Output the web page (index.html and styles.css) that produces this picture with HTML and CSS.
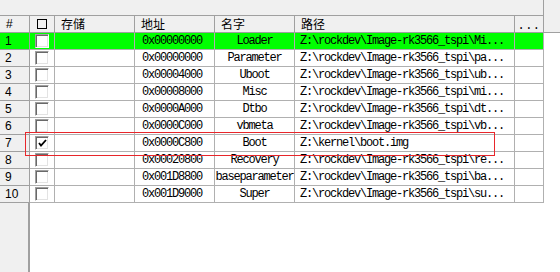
FILE: index.html
```html
<!DOCTYPE html>
<html>
<head>
<meta charset="utf-8">
<link rel="stylesheet" href="styles.css">
</head>
<body>
<div class="screen">
  <div class="head-area">
    <div class="head-main">
      <div class="strip"></div>
      <div class="cols hrow">
        <div class="hc num">#</div>
        <div class="hc chk"><span class="hbox"></span></div>
        <div class="hc">存储</div>
        <div class="hc">地址</div>
        <div class="hc">名字</div>
        <div class="hc">路径</div>
        <div class="hc more">...</div>
      </div>
    </div>
  </div>
  <div class="body">
    <div class="cols row sel">
      <div class="c num">1</div><div class="c chk"><span class="cb"></span></div><div class="c"></div>
      <div class="c mono addr">0x00000000</div><div class="c mono name">Loader</div>
      <div class="c mono path">Z:\rockdev\Image-rk3566_tspi\Mi...</div><div class="c"></div>
    </div>
    <div class="cols row">
      <div class="c num">2</div><div class="c chk"><span class="cb"></span></div><div class="c"></div>
      <div class="c mono addr">0x00000000</div><div class="c mono name">Parameter</div>
      <div class="c mono path">Z:\rockdev\Image-rk3566_tspi\pa...</div><div class="c"></div>
    </div>
    <div class="cols row">
      <div class="c num">3</div><div class="c chk"><span class="cb"></span></div><div class="c"></div>
      <div class="c mono addr">0x00004000</div><div class="c mono name">Uboot</div>
      <div class="c mono path">Z:\rockdev\Image-rk3566_tspi\ub...</div><div class="c"></div>
    </div>
    <div class="cols row">
      <div class="c num">4</div><div class="c chk"><span class="cb"></span></div><div class="c"></div>
      <div class="c mono addr">0x00008000</div><div class="c mono name">Misc</div>
      <div class="c mono path">Z:\rockdev\Image-rk3566_tspi\mi...</div><div class="c"></div>
    </div>
    <div class="cols row">
      <div class="c num">5</div><div class="c chk"><span class="cb"></span></div><div class="c"></div>
      <div class="c mono addr">0x0000A000</div><div class="c mono name">Dtbo</div>
      <div class="c mono path">Z:\rockdev\Image-rk3566_tspi\dt...</div><div class="c"></div>
    </div>
    <div class="cols row">
      <div class="c num">6</div><div class="c chk"><span class="cb"></span></div><div class="c"></div>
      <div class="c mono addr">0x0000C000</div><div class="c mono name">vbmeta</div>
      <div class="c mono path">Z:\rockdev\Image-rk3566_tspi\vb...</div><div class="c"></div>
    </div>
    <div class="cols row">
      <div class="c num">7</div><div class="c chk"><span class="cb"><svg class="tick" width="11" height="11" viewBox="0 0 11 11"><path d="M2 5 L4 7.5 L9 2" fill="none" stroke="#000" stroke-width="1.8"/></svg></span></div><div class="c"></div>
      <div class="c mono addr">0x0000C800</div><div class="c mono name">Boot</div>
      <div class="c mono path">Z:\kernel\boot.img</div><div class="c"></div>
    </div>
    <div class="cols row">
      <div class="c num">8</div><div class="c chk"><span class="cb"></span></div><div class="c"></div>
      <div class="c mono addr">0x00020800</div><div class="c mono name">Recovery</div>
      <div class="c mono path">Z:\rockdev\Image-rk3566_tspi\re...</div><div class="c"></div>
    </div>
    <div class="cols row">
      <div class="c num">9</div><div class="c chk"><span class="cb"></span></div><div class="c"></div>
      <div class="c mono addr">0x001D8800</div><div class="c mono name">baseparameter</div>
      <div class="c mono path">Z:\rockdev\Image-rk3566_tspi\ba...</div><div class="c"></div>
    </div>
    <div class="cols row">
      <div class="c num">10</div><div class="c chk"><span class="cb"></span></div><div class="c"></div>
      <div class="c mono addr">0x001D9000</div><div class="c mono name">Super</div>
      <div class="c mono path">Z:\rockdev\Image-rk3566_tspi\su...</div><div class="c"></div>
    </div>
  </div>
  <div class="mark"></div>
</div>
</body>
</html>
```
FILE: styles.css
```css
html, body {
  margin: 0;
  padding: 0;
  background: #fff;
}
.screen {
  position: relative;
  width: 560px;
  height: 272px;
  overflow: hidden;
  font-family: "Liberation Sans", "Noto Sans CJK SC", sans-serif;
  font-size: 12px;
  color: #000;
}
.head-area {
  background: #f0f0f0;
  border-bottom: 1px solid #a0a0a0;
}
.head-main {
  width: 544px;
}
.strip {
  height: 15px;
  border-right: 1px solid #a0a0a0;
  border-bottom: 1px solid #a0a0a0;
}
.cols {
  display: grid;
  grid-template-columns: 30px 25px 80px 80px 80px 220px 29px;
  width: 544px;
}
.hrow {
  height: 16px;
}
.hc {
  box-sizing: border-box;
  border-right: 1px solid #a0a0a0;
  padding-left: 6px;
  font-family: "Noto Sans CJK SC", sans-serif;
  font-size: 12px;
  line-height: 16px;
  white-space: nowrap;
  overflow: hidden;
}
.hc.num {
  font-family: "Liberation Sans", sans-serif;
  padding-left: 6px;
}
.hc.chk {
  display: flex;
  align-items: center;
  justify-content: center;
  padding-left: 0;
}
.hbox {
  width: 8px;
  height: 8px;
  border: 1px solid #000;
}
.hc.more {
  font-family: "Liberation Mono", monospace;
  text-align: center;
  padding-left: 0;
  letter-spacing: 0.5px;
  line-height: 20px;
}
.body {
  height: 239px;
  background: linear-gradient(to right, #f0f0f0 0, #f0f0f0 28px, #a0a0a0 28px, #a0a0a0 30px, #fff 30px);
}
.row {
  height: 17px;
  background: #fff;
}
.row.sel {
  background: #00ff00;
}
.c {
  box-sizing: border-box;
  border-right: 1px solid #b0b0b0;
  border-bottom: 1px solid #b0b0b0;
  height: 17px;
  line-height: 16px;
  white-space: nowrap;
  overflow: hidden;
}
.c.num {
  background: #f0f0f0;
  border-color: #a0a0a0;
  padding-left: 5px;
  font-family: "Liberation Sans", sans-serif;
  font-size: 12px;
}
.row.sel .c.num {
  background: #00ff00;
}
.c.chk {
  display: flex;
  align-items: center;
  padding-left: 5px;
}
.cb {
  box-sizing: border-box;
  width: 14px;
  height: 14px;
  background: #fff;
  border-top: 1px solid #a0a0a0;
  border-left: 1px solid #a0a0a0;
  border-right: 1px solid #fff;
  border-bottom: 1px solid #fff;
  box-shadow: inset 1px 1px 0 #696969, inset -1px -1px 0 #e3e3e3;
  display: flex;
  align-items: center;
  justify-content: center;
}
.tick {
  display: block;
}
.mono {
  font-family: "Liberation Mono", "DejaVu Sans Mono", monospace;
  font-size: 12px;
  letter-spacing: -1.2px;
}
.addr {
  padding-left: 7px;
}
.name {
  text-align: center;
}
.path {
  padding-left: 5px;
}
.mark {
  position: absolute;
  left: 25px;
  top: 132px;
  width: 470px;
  height: 24px;
  box-sizing: border-box;
  border: 1px solid #e8262b;
}
```
